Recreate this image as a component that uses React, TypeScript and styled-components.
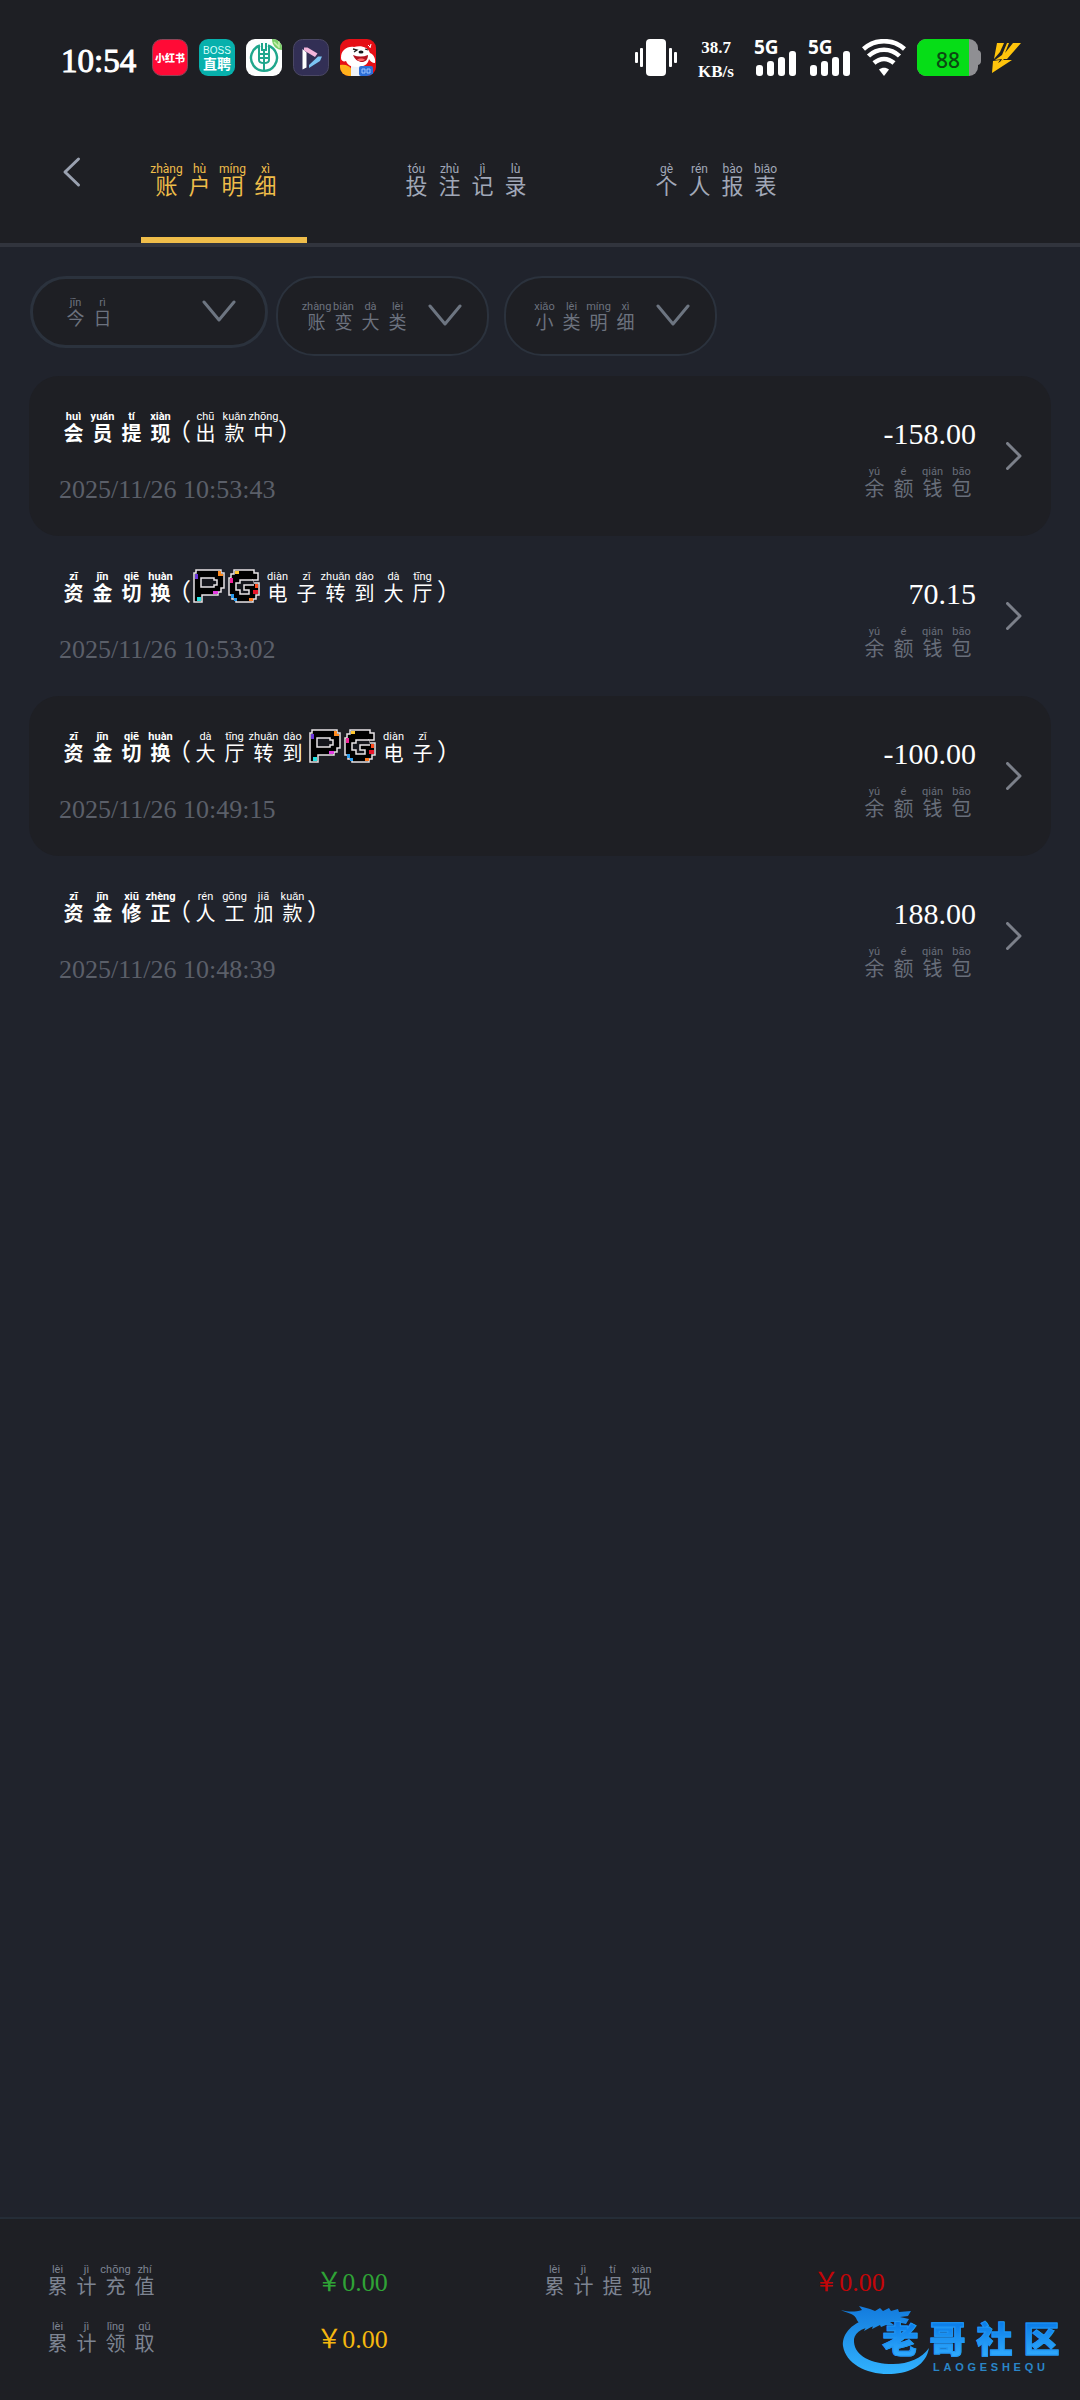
import React from "react";
import styled, { createGlobalStyle } from "styled-components";

const GlobalStyle = createGlobalStyle`
  * { box-sizing: border-box; }
  body { margin: 0; background: #20232c; }
  button { font: inherit; color: inherit; background: none; border: 0; padding: 0; cursor: pointer; }
`;

const serif = `"Liberation Serif", "Noto Sans CJK SC", serif`;
const hanzi = `"Liberation Sans", "Noto Sans CJK SC", sans-serif`;
const latin = `Roboto, sans-serif`;

const Page = styled.div`
  min-height: 100vh;
  display: flex;
  flex-direction: column;
  background: #20232c;
  color: #fff;
  font-family: ${serif};
`;

const Top = styled.header`
  background: #1e1f24;
  border-bottom: 4px solid #31343d;
`;

const StatusBar = styled.div`
  display: flex;
  align-items: center;
  height: 100px;
  padding: 15px 58px 0 61px;
`;

const Clock = styled.time`
  font-size: 33px;
  line-height: 40px;
  padding-top: 6px;
  -webkit-text-stroke: 1px #fff;
`;

const AppIcons = styled.div`
  display: flex;
  gap: 11px;
  margin-left: 16px;
  flex: 1;
`;

const SystemIcons = styled.div`
  display: flex;
  align-items: center;
  gap: 11px;
`;

const Speed = styled.div`
  display: flex;
  flex-direction: column;
  align-items: center;
  width: 54px;
  padding-top: 4px;
  font-size: 17px;
  line-height: 24px;
  font-weight: 700;
`;

const NavBar = styled.nav`
  display: flex;
  align-items: center;
  height: 143px;
  padding-left: 61px;
`;

const BackButton = styled.button`
  width: 80px;
  height: 48px;
  display: flex;
  align-items: center;
`;

const TabList = styled.div`
  display: flex;
  align-self: stretch;
  gap: 84px;
`;

const Tab = styled.button<{ $active?: boolean }>`
  width: 166px;
  padding: 23px 16px 0 0;
  display: flex;
  justify-content: center;
  align-items: center;
  color: ${(p) => (p.$active ? "#efbd4a" : "#a1a8b8")};
  border-bottom: 6px solid ${(p) => (p.$active ? "#efbd4a" : "transparent")};
`;

const sizes = {
  small: { cell: 27, glyph: 18, pinyin: 11 },
  medium: { cell: 29, glyph: 20, pinyin: 11 },
  large: { cell: 33, glyph: 22, pinyin: 12 },
};
type Size = keyof typeof sizes;

const Line = styled.span<{ $strong?: boolean }>`
  display: inline-flex;
  align-items: flex-end;
  font-weight: ${(p) => (p.$strong ? 700 : 400)};
`;

const Syllable = styled.ruby<{ $size: Size }>`
  display: inline-flex;
  flex-direction: column-reverse;
  align-items: center;
  width: ${(p) => sizes[p.$size].cell}px;
  font-family: ${hanzi};
  font-size: ${(p) => sizes[p.$size].glyph}px;
  line-height: ${(p) => sizes[p.$size].glyph}px;
`;

const Reading = styled.rt<{ $size: Size }>`
  display: block;
  font-family: ${latin};
  font-size: ${(p) => sizes[p.$size].pinyin}px;
  line-height: 14px;
  white-space: nowrap;
`;

const Paren = styled.span<{ $side: "open" | "close" }>`
  display: inline-flex;
  justify-content: ${(p) => (p.$side === "open" ? "flex-end" : "flex-start")};
  width: 16px;
  font-family: ${hanzi};
  font-size: 24px;
  line-height: 24px;
`;

type Pair = [string, string];

function Pinyin({ text, size = "medium", strong }: { text: Pair[]; size?: Size; strong?: boolean }) {
  return (
    <Line $strong={strong}>
      {text.map(([glyph, reading], i) => (
        <Syllable key={i} $size={size}>
          {glyph}
          <Reading $size={size}>{reading}</Reading>
        </Syllable>
      ))}
    </Line>
  );
}

const Filters = styled.form`
  display: flex;
  align-items: flex-start;
  padding: 29px 30px 20px;
`;

const Pill = styled.label<{ $wide?: boolean }>`
  position: relative;
  display: flex;
  align-items: center;
  justify-content: space-between;
  width: ${(p) => (p.$wide ? 238 : 213)}px;
  height: ${(p) => (p.$wide ? 72 : 80)}px;
  padding: ${(p) => (p.$wide ? "0 29px" : "0 25px")};
  margin-right: ${(p) => (p.$wide ? 8 : 15)}px;
  border: ${(p) => (p.$wide ? 3 : 2)}px solid #2b323d;
  border-radius: 38px;
  background: #1e1f24;
  color: #6c727e;
`;

const PillSelect = styled.select`
  position: absolute;
  inset: 0;
  width: 100%;
  height: 100%;
  opacity: 0;
  cursor: pointer;
`;

const Records = styled.ul`
  list-style: none;
  margin: 0;
  padding: 0 29px;
  flex: 1;
`;

const Record = styled.li<{ $shaded?: boolean }>`
  border-radius: 30px;
  background: ${(p) => (p.$shaded ? "#1e1f24" : "transparent")};
`;

const RecordButton = styled.button`
  display: flex;
  align-items: center;
  width: 100%;
  padding: 34px 29px 31px 30px;
  text-align: left;
`;

const RecordMain = styled.span`
  display: flex;
  flex-direction: column;
  align-items: flex-start;
  gap: 31px;
  flex: 1;
`;

const Title = styled.span`
  display: flex;
  align-items: flex-end;
  height: 34px;
`;

const Stamp = styled.time`
  font-size: 26px;
  line-height: 30px;
  color: #5b5f69;
`;

const RecordSide = styled.span`
  display: flex;
  flex-direction: column;
  align-items: flex-end;
  gap: 14px;
  margin-right: 30px;
  color: #686e7a;
`;

const RecordArrow = styled.span`
  display: flex;
  padding-bottom: 4px;
`;

const Amount = styled.span`
  font-size: 30px;
  line-height: 34px;
  color: #fff;
`;

const Totals = styled.footer`
  position: relative;
  border-top: 2px solid #252d37;
  background: #1e1f24;
  padding: 44px 43px 46px;
`;

const TotalsGrid = styled.dl`
  margin: 0;
  display: grid;
  grid-template-columns: 1fr 1fr;
  row-gap: 23px;
`;

const Total = styled.div`
  display: grid;
  grid-template-columns: 55% 1fr;
  align-items: end;
  color: #7d8492;
`;

const TotalLabel = styled.dt`
  display: flex;
`;

const TotalValue = styled.dd<{ $color: string }>`
  margin: 0;
  font-size: 26px;
  line-height: 28px;
  color: ${(p) => p.$color};
`;

const Watermark = styled.div`
  position: absolute;
  right: 15px;
  bottom: 24px;
  width: 224px;
  height: 72px;
`;

const DragonArt = styled.svg`
  position: absolute;
  left: 0;
  top: 0;
`;

const BrandName = styled.div`
  position: absolute;
  right: 0;
  top: 18px;
  display: grid;
  grid-template-columns: repeat(4, 47px);
  justify-items: center;
  font-family: ${hanzi};
  font-size: 36px;
  line-height: 38px;
  font-weight: 900;
  color: transparent;
  -webkit-text-stroke: 1px #1f96f5;
  background: linear-gradient(#0a7be8, #35b0ff);
  background-clip: text;
  -webkit-background-clip: text;
`;

const BrandLatin = styled.div`
  position: absolute;
  right: 20px;
  top: 58px;
  width: 112px;
  display: flex;
  justify-content: space-between;
  font-family: "Liberation Sans", sans-serif;
  font-size: 11px;
  line-height: 11px;
  font-weight: 700;
  color: #2a86c8;
`;

function XhsIcon() {
  return (
    <svg width="36" height="37" viewBox="0 0 36 37" aria-label="小红书">
      <rect x="0.5" y="0.5" width="35" height="36" rx="9" fill="#ff0a36" stroke="#8a4658" />
      <text x="18" y="23" fontSize="10" fontWeight="900" fill="#fff" textAnchor="middle" fontFamily="Liberation Sans, Noto Sans CJK SC">小红书</text>
    </svg>
  );
}

function BossIcon() {
  return (
    <svg width="36" height="37" viewBox="0 0 36 37" aria-label="BOSS直聘">
      <rect width="36" height="37" rx="9" fill="#07b0ac" />
      <text x="18" y="15" fontSize="10" fill="#d8fffb" textAnchor="middle" fontFamily="Liberation Sans">BOSS</text>
      <text x="18" y="30" fontSize="14" fontWeight="700" fill="#fff" textAnchor="middle" fontFamily="Liberation Sans, Noto Sans CJK SC">直聘</text>
    </svg>
  );
}

function BankIcon() {
  return (
    <svg width="36" height="37" viewBox="0 0 36 37" aria-hidden="true">
      <clipPath id="bank-clip"><rect width="36" height="37" rx="9" /></clipPath>
      <g clipPath="url(#bank-clip)">
        <rect width="36" height="37" fill="#fdfefe" />
        <path d="M26 0h10v11c-5 0-10-4-10-11z" fill="#7cd06a" />
        <path d="M28 3l5 5M33 1v8" stroke="#c6efae" strokeWidth="1.5" />
        <path d="M14 6.5A13 13 0 1 0 22 6.5" fill="none" stroke="#1fa68c" strokeWidth="2.4" />
        <path d="M16 4v8M20 4v8M18 10v22" fill="none" stroke="#1fa68c" strokeWidth="2" />
        <path d="M13 8v13c0 2 2 3 5 3s5-1 5-3V8M13 15h10M13 19h10" fill="none" stroke="#1fa68c" strokeWidth="2" />
      </g>
    </svg>
  );
}

function PlayerIcon() {
  return (
    <svg width="36" height="37" viewBox="0 0 36 37" aria-hidden="true">
      <rect x="0.5" y="0.5" width="35" height="36" rx="9" fill="#322f55" stroke="#4a4764" />
      <path d="M9.5 10l4 3.500v15l-4 2z" fill="#fff" />
      <path d="M11 8.500h3.500l10 6-2.500 3.500-11-6.500z" fill="#f4b6dc" />
      <path d="M16 26l9-8.500h4l-2 4.500-11 7z" fill="#7cc4f2" />
    </svg>
  );
}

function DogIcon() {
  return (
    <svg width="36" height="37" viewBox="0 0 36 37" aria-hidden="true">
      <clipPath id="dog-clip"><rect width="36" height="37" rx="9" /></clipPath>
      <g clipPath="url(#dog-clip)">
        <rect width="36" height="37" fill="#e60f16" />
        <path d="M0 37V26c6-1 10 1 12 5v6z" fill="#ffb11c" />
        <path d="M11 37V27h12v10z" fill="#eef2f8" />
        <path d="M1 19C1 11 7 7 14 8c7-2 14 0 16 6 3 1 6 5 5 10-3 0-5-2-6-4-1 6-6 8-12 8-7 0-10-3-11-6-2 1-5 0-5-3z" fill="#fff" />
        <path d="M13 16c5 2 10 2 15 0 0 5-3 7-6 7s-7-2-9-7z" fill="#b3121e" />
        <path d="M17 20.500c2-1.500 6-1.500 8 0-2 2-6 2-8 0z" fill="#ff6a6a" />
        <path d="M13 10l4 1-3 2M25 10l3 1" stroke="#222" strokeWidth="1.3" fill="none" />
        <ellipse cx="21" cy="13" rx="2.500" ry="1.500" fill="#16161a" />
        <path d="M28 6l2 2M31 5l-1 4" stroke="#fff" strokeWidth="1" />
        <rect x="19" y="27" width="14" height="10" rx="2" fill="#2c6fd8" />
        <path d="M22 30h3v4h-3zM27 30h3v4h-3z" fill="none" stroke="#9cc4ff" />
      </g>
    </svg>
  );
}

function Vibrate() {
  return (
    <svg width="44" height="38" viewBox="0 0 44 38" fill="#fff" aria-label="vibrate">
      <rect x="12" y="0" width="20" height="37" rx="4" />
      <rect x="6" y="9" width="3" height="19" rx="1" />
      <rect x="35" y="9" width="3" height="19" rx="1" />
      <rect x="1" y="13" width="3" height="11" rx="1" />
      <rect x="40" y="13" width="3" height="11" rx="1" />
    </svg>
  );
}

function Signal() {
  return (
    <svg width="43" height="50" viewBox="0 -6 43 50" fill="#fff" aria-label="5G signal">
      <text x="0" y="15" fontSize="19" fontWeight="700" fontFamily="Noto Sans">5G</text>
      <rect x="2" y="26" width="7" height="11" rx="3" />
      <rect x="13" y="22" width="7" height="15" rx="3" />
      <rect x="24" y="18" width="7" height="19" rx="3" />
      <rect x="35" y="12" width="7" height="25" rx="3" />
    </svg>
  );
}

function Wifi() {
  return (
    <svg width="44" height="38" viewBox="0 0 44 38" fill="none" stroke="#fff" strokeWidth="4.500" aria-label="wifi">
      <path d="M1.500 10C13-.5 31-.5 42.500 10" />
      <path d="M6.500 17C15 8.500 29 8.500 37.500 17" />
      <path d="M12 24c6-5.500 14-5.500 20 0" />
      <path d="M17 30.500c3-2.500 7-2.500 10 0L22 37z" fill="#fff" stroke="none" />
    </svg>
  );
}

function Battery() {
  return (
    <svg width="64" height="38" viewBox="0 0 64 38" aria-label="battery 88%">
      <clipPath id="cell"><rect width="61" height="37" rx="9" /></clipPath>
      <path d="M59 11h2q3 1 3 4v7q0 3-3 4h-2z" fill="#8f8f93" />
      <g clipPath="url(#cell)">
        <rect width="61" height="37" fill="#8f8f93" />
        <rect width="52" height="37" fill="#06dd17" />
      </g>
      <text x="31" y="29" fontSize="21" fontWeight="500" textAnchor="middle" fill="#0b4a12" fontFamily="Noto Sans">88</text>
    </svg>
  );
}

function Bolt() {
  return (
    <svg width="30" height="38" viewBox="0 0 30 38" fill="#ffc40c" aria-label="charging">
      <path d="M5 4h7L8 13 2 20z" />
      <path d="M15 4l-5 12-7 5 7-1-2 4 4-4h3L29 4h-8l-8 10 4-10z" />
      <path d="M1 22l7-1-2 3 5-3h9L0 34z" />
    </svg>
  );
}

function Chevron({ dir }: { dir: "left" | "right" | "down" }) {
  const shapes = {
    left: { w: 20, h: 32, d: "M17.500 3L4 16l13.500 13", c: "#9aa1b0" },
    right: { w: 16, h: 28, d: "M1.500 1.500L14 14 1.500 26.500", c: "#7c808a" },
    down: { w: 34, h: 24, d: "M2 2l15 18L32 2", c: "#6d7581" },
  };
  const s = shapes[dir];
  return (
    <svg width={s.w} height={s.h} viewBox={`0 0 ${s.w} ${s.h}`} fill="none" stroke={s.c} strokeWidth="3" strokeLinecap="round" strokeLinejoin="round" aria-hidden="true">
      <path d={s.d} />
    </svg>
  );
}

const PgArt = styled.svg`
  display: block;
  margin: 0 3px 1px 2px;
`;

function PgLogo() {
  return (
    <PgArt width="67" height="34" viewBox="0 0 67 34" aria-label="PG" strokeLinejoin="miter">
      <g fill="#000" stroke="#e8e4e6" strokeWidth="1.5">
        <path d="M1 4h2V1h25v3h3v15h-3v4h-3v3H9v3h0v4H1z" />
        <path d="M8 9h13v2h3v5h-3v2H8z" fill="#15161c" />
        <path d="M36 9h2V5h3V1h20v3h4v7h-5v3h6v12h-3v4h-3v3H43v-3h-4v-4h-3z" />
        <path d="M60 11H47v3h-4v7h4v4h9v-4h-5v-5h10" fill="#15161c" />
      </g>
      <path d="M2 5h3v5H2z" fill="#6a35d8" />
      <path d="M25 2h3v3h2v2h-5z" fill="#ff8a1e" />
      <path d="M20 22h5v3h-5z" fill="#e23be0" />
      <path d="M4 28h4v4H4z" fill="#22e0e0" />
      <path d="M42 2h4v3h-4z" fill="#ffc62e" />
      <path d="M37 9h3v5h-3z" fill="#f0249a" />
      <path d="M62 15h3v4h-3z" fill="#ff4a1c" />
      <path d="M60 21h5v4h-5z" fill="#e8152b" />
      <path d="M56 29h4v3h-4z" fill="#ff7a22" />
      <path d="M38 25h3v4h3v3h-3v-3h-3z" fill="#2a9df0" />
    </PgArt>
  );
}

function Dragon() {
  return (
    <DragonArt width="100" height="72" viewBox="0 0 100 72" aria-hidden="true">
      <defs>
        <linearGradient id="dragon-fill" gradientUnits="userSpaceOnUse" x1="0" y1="0" x2="0" y2="72">
          <stop offset="0" stopColor="#1279dc" />
          <stop offset="1" stopColor="#32b4ff" />
        </linearGradient>
      </defs>
      <g fill="url(#dragon-fill)">
        <path d="M28 14C8 20 1 32 2 42c3 18 24 29 48 28 20-1 35-9 38-26-7 10-20 16-36 16-22 0-38-8-39-22-1-8 6-14 21-16z" />
        <path d="M0 6c8 2 14 2 21 0l-3-4 11 3 5 2 5-3 3 3 6-3 2 3 7-2 1 3 12-1-3 5-8 1 9 2-3 5-9-2-7 0 4 3-8 0-5 2-1-2-8 4 1-3-9 5 3-6c-6 0-9-2-11-7C12 9 5 9 0 6z" />
      </g>
    </DragonArt>
  );
}

const tabs: Pair[][] = [
  [["账", "zhàng"], ["户", "hù"], ["明", "míng"], ["细", "xì"]],
  [["投", "tóu"], ["注", "zhù"], ["记", "jì"], ["录", "lù"]],
  [["个", "gè"], ["人", "rén"], ["报", "bào"], ["表", "biǎo"]],
];

const filters: Pair[][] = [
  [["今", "jīn"], ["日", "rì"]],
  [["账", "zhàng"], ["变", "biàn"], ["大", "dà"], ["类", "lèi"]],
  [["小", "xiǎo"], ["类", "lèi"], ["明", "míng"], ["细", "xì"]],
];

const wallet: Pair[] = [["余", "yú"], ["额", "é"], ["钱", "qián"], ["包", "bāo"]];
const transfer: Pair[] = [["资", "zī"], ["金", "jīn"], ["切", "qiē"], ["换", "huàn"]];
const electronic: Pair[] = [["电", "diàn"], ["子", "zǐ"]];
const hall: Pair[] = [["大", "dà"], ["厅", "tīng"]];
const moveTo: Pair[] = [["转", "zhuǎn"], ["到", "dào"]];

type Entry = { kind: Pair[]; detail: (Pair[] | "PG")[]; time: string; amount: string };

const entries: Entry[] = [
  {
    kind: [["会", "huì"], ["员", "yuán"], ["提", "tí"], ["现", "xiàn"]],
    detail: [[["出", "chū"], ["款", "kuǎn"], ["中", "zhōng"]]],
    time: "2025/11/26 10:53:43",
    amount: "-158.00",
  },
  { kind: transfer, detail: ["PG", electronic, moveTo, hall], time: "2025/11/26 10:53:02", amount: "70.15" },
  { kind: transfer, detail: [hall, moveTo, "PG", electronic], time: "2025/11/26 10:49:15", amount: "-100.00" },
  {
    kind: [["资", "zī"], ["金", "jīn"], ["修", "xiū"], ["正", "zhèng"]],
    detail: [[["人", "rén"], ["工", "gōng"], ["加", "jiā"], ["款", "kuǎn"]]],
    time: "2025/11/26 10:48:39",
    amount: "188.00",
  },
];

const totals: { label: Pair[]; value: string; color: string }[] = [
  { label: [["累", "lèi"], ["计", "jì"], ["充", "chōng"], ["值", "zhí"]], value: "￥0.00", color: "#2fa336" },
  { label: [["累", "lèi"], ["计", "jì"], ["提", "tí"], ["现", "xiàn"]], value: "￥0.00", color: "#c40508" },
  { label: [["累", "lèi"], ["计", "jì"], ["领", "lǐng"], ["取", "qǔ"]], value: "￥0.00", color: "#f5b70f" },
];

const plain = (text: Pair[]) => text.map(([glyph]) => glyph).join("");

export default function App() {
  return (
    <Page>
      <GlobalStyle />
      <Top>
        <StatusBar>
          <Clock>10:54</Clock>
          <AppIcons>
            <XhsIcon />
            <BossIcon />
            <BankIcon />
            <PlayerIcon />
            <DogIcon />
          </AppIcons>
          <SystemIcons>
            <Vibrate />
            <Speed>
              <span>38.7</span>
              <span>KB/s</span>
            </Speed>
            <Signal />
            <Signal />
            <Wifi />
            <Battery />
            <Bolt />
          </SystemIcons>
        </StatusBar>
        <NavBar>
          <BackButton aria-label="返回">
            <Chevron dir="left" />
          </BackButton>
          <TabList role="tablist">
            {tabs.map((text, i) => (
              <Tab key={i} role="tab" aria-selected={i === 0} $active={i === 0}>
                <Pinyin text={text} size="large" />
              </Tab>
            ))}
          </TabList>
        </NavBar>
      </Top>
      <Filters>
        {filters.map((text, i) => (
          <Pill key={i} $wide={i === 0}>
            <Pinyin text={text} size="small" />
            <Chevron dir="down" />
            <PillSelect aria-label={plain(text)}>
              <option>{plain(text)}</option>
            </PillSelect>
          </Pill>
        ))}
      </Filters>
      <Records>
        {entries.map((entry, i) => (
          <Record key={entry.time} $shaded={i % 2 === 0}>
            <RecordButton>
              <RecordMain>
                <Title>
                  <Pinyin text={entry.kind} strong />
                  <Paren $side="open">（</Paren>
                  {entry.detail.map((part, j) =>
                    part === "PG" ? <PgLogo key={j} /> : <Pinyin key={j} text={part} />
                  )}
                  <Paren $side="close">）</Paren>
                </Title>
                <Stamp>{entry.time}</Stamp>
              </RecordMain>
              <RecordSide>
                <Amount>{entry.amount}</Amount>
                <Pinyin text={wallet} />
              </RecordSide>
              <RecordArrow>
                <Chevron dir="right" />
              </RecordArrow>
            </RecordButton>
          </Record>
        ))}
      </Records>
      <Totals>
        <TotalsGrid>
          {totals.map((total, i) => (
            <Total key={i}>
              <TotalLabel>
                <Pinyin text={total.label} />
              </TotalLabel>
              <TotalValue $color={total.color}>{total.value}</TotalValue>
            </Total>
          ))}
        </TotalsGrid>
        <Watermark>
          <Dragon />
          <BrandName>
            {[..."老哥社区"].map((c) => (
              <span key={c}>{c}</span>
            ))}
          </BrandName>
          <BrandLatin>
            {[..."LAOGESHEQU"].map((c, i) => (
              <span key={i}>{c}</span>
            ))}
          </BrandLatin>
        </Watermark>
      </Totals>
    </Page>
  );
}
